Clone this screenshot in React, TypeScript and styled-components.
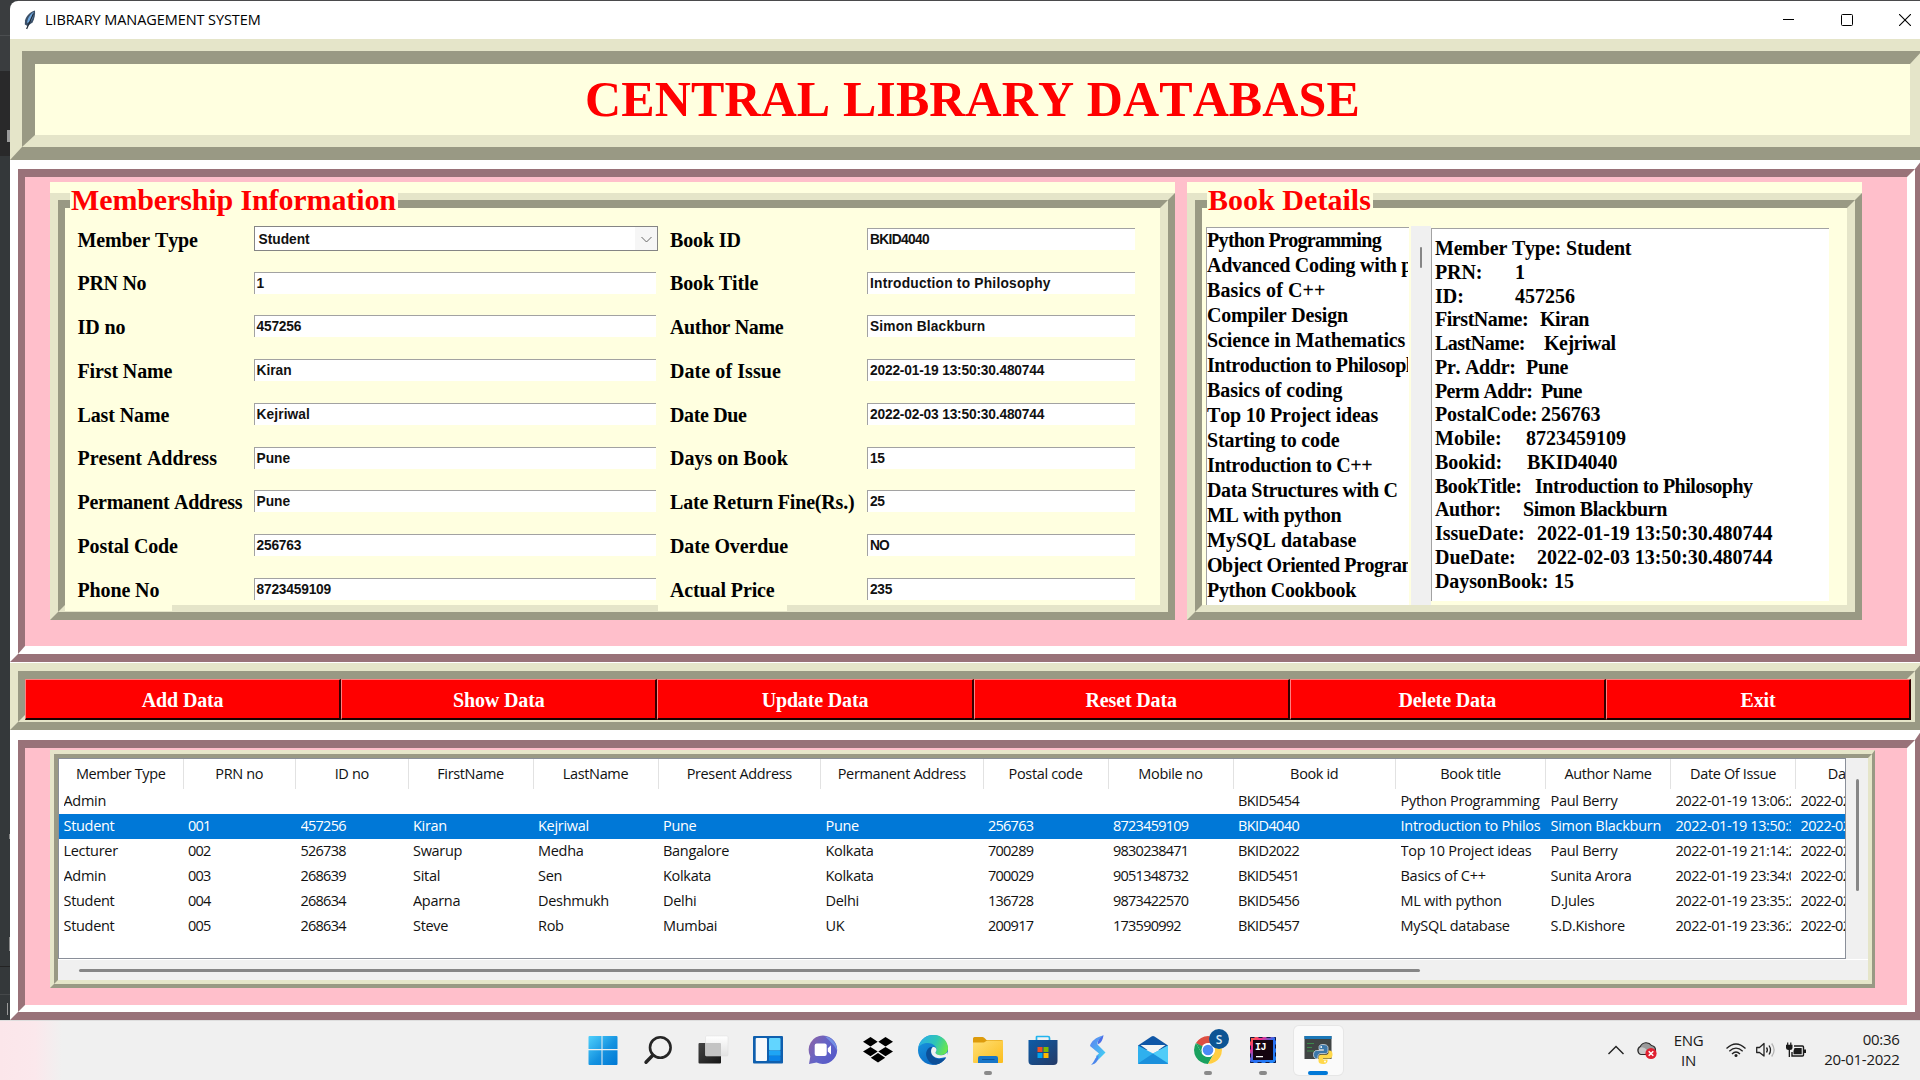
import React from 'react';
import styled, { createGlobalStyle, css } from 'styled-components';

const YELLOW = { base: '#ffffe0', light: '#e5e5c9', dark: '#999984' };
const PINK = { base: '#ffbfcb', light: '#ffffff', dark: '#997279' };
type Palette = typeof YELLOW;

const SERIF = "'Liberation Serif', 'Times New Roman', serif";
const SANS = "'Liberation Sans', Arial, sans-serif";
const UI = "'Open Sans', 'Noto Sans', sans-serif";

const GlobalStyle = createGlobalStyle`
  * { box-sizing: border-box; font-kerning: none !important; }
  html, body { margin: 0; padding: 0; }
  body { width: 1920px; height: 1080px; overflow: hidden; background: #333638; }
`;

const Screen = styled.div`
  width: 1920px;
  height: 1080px;
  display: flex;
  flex-direction: column;
  overflow: hidden;
`;

const Desktop = styled.div`
  height: 1020px;
  display: grid;
  grid-template-columns: 10px 1910px;
  padding-top: 1px;
  background: #4a4a4c;
`;

/* sliver of the editor that is open behind the window */
const Backdrop = styled.div`
  width: 18px;
  height: 1020px;
  margin-top: -1px;
  background:
    linear-gradient(#9a9a9a, #9a9a9a) 7px 130px / 3px 12px no-repeat,
    linear-gradient(#8a8a8a, #8a8a8a) 9px 834px / 1px 5px no-repeat,
    linear-gradient(#8a8a8a, #8a8a8a) 9px 937px / 1px 14px no-repeat,
    linear-gradient(#9a9a9a, #9a9a9a) 7px 1003px / 1px 12px no-repeat,
    linear-gradient(#4b4e50, #4b4e50) 0 35px / 10px 1px no-repeat,
    linear-gradient(#232323, #232323) 0 966px / 10px 1px no-repeat,
    linear-gradient(#45484a, #45484a) 0 994px / 10px 1px no-repeat,
    linear-gradient(#3a3d3f 0 71px, #29292a 71px 156px, #34383a 156px);
`;

const Window = styled.div`
  height: 1019px;
  display: flex;
  flex-direction: column;
  align-items: flex-start;
  background: #fff;
  border-top-left-radius: 8px;
  overflow: hidden;
  z-index: 1;
`;

const TitleBar = styled.header`
  width: 1910px;
  height: 38px;
  flex: none;
  display: flex;
  align-items: center;
  padding: 0 9px 0 13px;
  font: 14.5px ${UI};
  color: #000;
`;

const TitleText = styled.span`
  margin: -2px auto 0 9px;
  letter-spacing: -0.08px;
  white-space: nowrap;
`;

const Controls = styled.div`
  display: flex;
  gap: 46px;
`;

type Sides = [number, number, number, number];
const widths = (s: Sides) => s.map((n) => `${n}px`).join(' ');

/* a ridge is two bevels: the outer one raised, the inner one sunken */
const Outer = styled.div<{ $p: Palette; $b: Sides }>`
  flex: none;
  display: flex;
  border-style: solid;
  border-width: ${({ $b }) => widths($b)};
  border-color: ${({ $p }) => css`${$p.light} ${$p.dark} ${$p.dark} ${$p.light}`};
  background: ${({ $p }) => $p.base};
`;

const Inner = styled.div<{ $p: Palette; $b: Sides }>`
  flex: 1;
  min-width: 0;
  border-style: solid;
  border-width: ${({ $b }) => widths($b)};
  border-color: ${({ $p }) => css`${$p.dark} ${$p.light} ${$p.light} ${$p.dark}`};
  background: ${({ $p }) => $p.base};
`;

const BannerOuter = styled(Outer)`
  width: 1925px;
  height: 121px;
`;

const Banner = styled(Inner)`
  display: flex;
  justify-content: center;
  align-items: center;
  font: bold 50px ${SERIF};
  letter-spacing: 0.1px;
  color: #ff0000;
  white-space: nowrap;

  span { margin-top: -1px; }
`;

const DetailsOuter = styled(Outer)`
  width: 1912px;
  height: 502px;
`;

const Details = styled(Inner)`
  display: flex;
  gap: 12px;
  padding: 5px 0 0 25px;
`;

const Group = styled.section<{ $w: number }>`
  position: relative;
  width: ${({ $w }) => $w}px;
  height: 438px;
  padding-top: 11px;
  display: flex;
  background: ${YELLOW.base};
`;

const GroupOuter = styled(Outer)`
  width: 100%;
  height: 427px;
`;

const Legend = styled.h2<{ $track: number }>`
  position: absolute;
  left: 20px;
  top: 1px;
  margin: 0;
  padding: 0 2px 0 1px;
  height: 33px;
  background: ${YELLOW.base};
  font: bold 30px/34px ${SERIF};
  letter-spacing: ${({ $track }) => $track}px;
  color: #ff0000;
  white-space: nowrap;
`;

const Form = styled.div`
  display: grid;
  grid-template-columns: 188.5px 404px 209.5px 269px;
  grid-auto-rows: 43.75px;
  margin-top: 9px;
`;

const Label = styled.label<{ $track?: number }>`
  justify-self: start;
  height: 43.75px;
  padding: 2.5px 12.5px 0 12.5px;
  background: ${YELLOW.base};
  font: bold 20px/41px ${SERIF};
  letter-spacing: ${({ $track = -0.12 }) => $track}px;
  color: #000;
  white-space: nowrap;
`;

const Entry = styled.div<{ $track: number }>`
  align-self: center;
  height: 22px;
  width: calc(100% - 1.5px);
  border-top: 1.5px solid #a2a2a2;
  border-left: 1.5px solid #a2a2a2;
  padding-left: 2px;
  background: #fff;
  font: bold 13.75px/22px ${SANS};
  letter-spacing: ${({ $track }) => $track}px;
  color: #111;
  white-space: nowrap;
`;

const Combo = styled.div`
  align-self: center;
  height: 25px;
  width: 404px;
  display: flex;
  justify-content: space-between;
  align-items: center;
  padding: 1px 5px 0 4px;
  border: 1px solid #858585;
  background: linear-gradient(90deg, #fff 380px, #f6f6f6 380px);
  font: bold 13.75px ${SANS};
  color: #111;
`;

const Pair = styled.div`
  display: flex;
  align-items: flex-start;
  margin: 18px 0 0 4px;
`;

const List = styled.ul`
  margin: 1px 0 0;
  padding: 0;
  width: 203px;
  height: 378px;
  overflow: hidden;
  list-style: none;
  border: solid #a2a2a2;
  border-width: 1px 0 0 1px;
  background: #fff;
`;

const ListItem = styled.li<{ $track: number }>`
  height: 25px;
  width: 201px;
  overflow: hidden;
  font: bold 20px/25px ${SERIF};
  letter-spacing: ${({ $track }) => $track}px;
  color: #000;
  white-space: nowrap;
`;

const ListScroll = styled.div`
  width: 20px;
  height: 379px;
  margin-left: 2px;
  padding: 21px 0 0 9px;
  background: #f0f0f0;
`;

const Thumb = styled.div<{ $w: number; $h: number }>`
  width: ${({ $w }) => $w}px;
  height: ${({ $h }) => $h}px;
  border-radius: 2px;
  background: #868686;
`;

const Receipt = styled.div`
  width: 398px;
  height: 373px;
  margin-top: 2px;
  padding: 7px 0 0 3px;
  border: solid #a2a2a2;
  border-width: 1.5px 0 0 1.5px;
  background: #fff;
`;

const ReceiptLine = styled.div<{ $key: number; $track: number }>`
  display: grid;
  grid-template-columns: ${({ $key }) => $key}px auto;
  height: 23.75px;
  font: bold 20px/25px ${SERIF};
  letter-spacing: ${({ $track }) => $track}px;
  color: #000;
  white-space: nowrap;
`;

const ActionsOuter = styled(Outer)`
  width: 1912px;
  height: 67px;
  margin-top: 1px;
`;

const Actions = styled(Inner)`
  display: flex;
  align-items: flex-start;
`;

const ActionButton = styled.button<{ $w: number }>`
  flex: none;
  width: ${({ $w }) => $w}px;
  height: 41px;
  margin: 0;
  padding: 1px 0 0 0;
  border: solid;
  border-width: 1px 2px 2px 1px;
  border-color: #ff8080 #330000 #1a0000 #ff8080;
  background: #ff0000;
  font: bold 20px/38px ${SERIF};
  letter-spacing: -0.15px;
  color: #fff;
`;

const RecordsOuter = styled(Outer)`
  width: 1912px;
  height: 290px;
`;

const Records = styled(Inner)`
  padding: 2px 0 0 25px;
`;

const TableOuter = styled(Outer)`
  width: 1825px;
  height: 238px;
`;

const TableFrame = styled(Inner)`
  display: grid;
  grid-template-columns: 1788px 22px;
  grid-template-rows: 201px 21px;
  background: #f0f0f0;
`;

const Tree = styled.div`
  overflow: hidden;
  border: 1px solid #8a8f99;
  background: #fff;
  font: 14.5px ${UI};
  color: #111;
`;

const COLS = '124.5px 112.5px 112.5px 125px 125px 162.5px 162.5px 125px 125px 162.5px 150px 125px 125px 125px';

const HeadRow = styled.div`
  display: grid;
  grid-template-columns: ${COLS};
  width: 1862px;
  height: 30px;
`;

const HeadCell = styled.div`
  border-right: 1.5px solid #e2e2e2;
  text-align: center;
  line-height: 29px;
  letter-spacing: -0.35px;
  white-space: nowrap;
`;

const Row = styled.div<{ $on: boolean }>`
  display: grid;
  grid-template-columns: ${COLS};
  width: 1862px;
  height: 25px;
  background: ${({ $on }) => ($on ? '#0078d7' : 'transparent')};
  color: ${({ $on }) => ($on ? '#fff' : '#111')};
`;

const Cell = styled.div<{ $track: number }>`
  margin: 0 5px 0 4.5px;
  overflow: hidden;
  line-height: 24px;
  letter-spacing: ${({ $track }) => $track}px;
  white-space: nowrap;
`;

const VScroll = styled.div`
  padding: 21px 0 0 10px;
  background: #f0f0f0;
`;

const HScroll = styled.div`
  grid-column: 1 / 3;
  padding: 9px 0 0 21px;
  border-top: 1px solid #fff;
  background: #f0f0f0;
`;

const Taskbar = styled.footer`
  height: 60px;
  display: flex;
  align-items: center;
  padding-left: 575.5px;
  border-top: 1px solid #dedede;
  background: linear-gradient(90deg, #fbe6ea 0, #fbe8ec 35px, #f0f0f0 62px);
`;

const Slot = styled.div`
  position: relative;
  width: 55px;
  height: 60px;
  display: flex;
  align-items: center;
  justify-content: center;
`;

const Tile = styled.div<{ $on?: boolean }>`
  width: 49px;
  height: 49px;
  margin-top: -1px;
  display: flex;
  align-items: center;
  justify-content: center;
  border-radius: 5px;
  ${({ $on }) => $on && 'background: #fafafa; box-shadow: 0 0 0 1px #e6e6e6;'}

  svg { display: block; overflow: visible; }
`;

const Pip = styled.i<{ $on?: boolean }>`
  position: absolute;
  left: 50%;
  bottom: 6px;
  width: ${({ $on }) => ($on ? 20 : 8)}px;
  height: 4px;
  border-radius: 2px;
  transform: translateX(-50%);
  background: ${({ $on }) => ($on ? '#0078d7' : '#8a8a8a')};
`;

const Tray = styled.div`
  margin: -1px 0 0 auto;
  display: flex;
  align-items: center;
  padding-right: 20.5px;
  font: 15px/20px ${UI};
  color: #1a1a1a;

  svg { display: block; overflow: visible; }
`;

const CloudIcon = styled.svg`
  margin-left: 12px;
`;

const Language = styled.div`
  width: 30px;
  margin: 0 22px 0 17px;
  text-align: center;
  letter-spacing: -0.3px;
`;

const Status = styled.div`
  display: flex;
  align-items: center;
  gap: 10px;
`;

const Clock = styled.div`
  width: 94px;
  margin-top: -2px;
  text-align: right;
  letter-spacing: -0.3px;
  white-space: nowrap;
`;

type Field = { label: string; value: string; track?: number; labelTrack?: number };
const leftFields: Field[] = [
  { label: 'Member Type', value: 'Student' },
  { label: 'PRN No', value: '1', labelTrack: -0.3 },
  { label: 'ID no', value: '457256', track: -0.2, labelTrack: -0.1 },
  { label: 'First Name', value: 'Kiran' },
  { label: 'Last Name', value: 'Kejriwal', track: 0.1 },
  { label: 'Present Address', value: 'Pune', labelTrack: 0 },
  { label: 'Permanent Address', value: 'Pune', labelTrack: -0.28 },
  { label: 'Postal Code', value: '256763', track: -0.2 },
  { label: 'Phone No', value: '8723459109', track: -0.2 },
];
const rightFields: Field[] = [
  { label: 'Book ID', value: 'BKID4040', track: -0.65 },
  { label: 'Book Title', value: 'Introduction to Philosophy', track: 0.22 },
  { label: 'Author Name', value: 'Simon Blackburn', track: 0.15, labelTrack: -0.35 },
  { label: 'Date of Issue', value: '2022-01-19 13:50:30.480744', track: -0.18, labelTrack: 0.07 },
  { label: 'Date Due', value: '2022-02-03 13:50:30.480744', track: -0.18, labelTrack: -0.35 },
  { label: 'Days on Book', value: '15', track: -0.3, labelTrack: 0 },
  { label: 'Late Return Fine(Rs.)', value: '25', track: -0.3, labelTrack: -0.18 },
  { label: 'Date Overdue', value: 'NO', track: -1 },
  { label: 'Actual Price', value: '235', track: -0.3 },
];

const books: [string, number][] = [
  ['Python Programming', -0.67], ['Advanced Coding with python', -0.3], ['Basics of C++', 0.1],
  ['Compiler Design', -0.2], ['Science in Mathematics', -0.13], ['Introduction to Philosophy', -0.42],
  ['Basics of coding', -0.08], ['Top 10 Project ideas', -0.2], ['Starting to code', -0.2],
  ['Introduction to C++', -0.4], ['Data Structures with C', -0.35], ['ML with python', -0.42],
  ['MySQL database', 0], ['Object Oriented Programming', -0.45], ['Python Cookbook', -0.33],
];

const receipt: [string, string, number, number][] = [
  ['Member Type:', 'Student', 131, -0.2], ['PRN:', '1', 80, -0.1], ['ID:', '457256', 80, 0],
  ['FirstName:', 'Kiran', 105, -0.45], ['LastName:', 'Kejriwal', 109, -0.5], ['Pr. Addr:', 'Pune', 91, -0.3],
  ['Perm Addr:', 'Pune', 106, -0.65], ['PostalCode:', '256763', 106, -0.1], ['Mobile:', '8723459109', 91, 0],
  ['Bookid:', 'BKID4040', 92, -0.1], ['BookTitle:', 'Introduction to Philosophy', 100, -0.48],
  ['Author:', 'Simon Blackburn', 88, -0.45], ['IssueDate:', '2022-01-19 13:50:30.480744', 102, -0.05],
  ['DueDate:', '2022-02-03 13:50:30.480744', 102, -0.05], ['DaysonBook:', '15', 119, -0.1],
];

const actions = ['Add Data', 'Show Data', 'Update Data', 'Reset Data', 'Delete Data', 'Exit'];

const heads = [
  'Member Type', 'PRN no', 'ID no', 'FirstName', 'LastName', 'Present Address', 'Permanent Address',
  'Postal code', 'Mobile no', 'Book id', 'Book title', 'Author Name', 'Date Of Issue', 'Date Due',
];

/* letter spacing of each table column */
const cellTracks = [-0.3, -0.75, -0.75, -0.3, -0.3, -0.3, -0.3, -0.75, -0.75, -0.6, -0.27, -0.27, -0.42, -0.65];

const rows = [
  ['Admin', '', '', '', '', '', '', '', '', 'BKID5454', 'Python Programming', 'Paul Berry', '2022-01-19 13:06:22', '2022-02-03'],
  ['Student', '001', '457256', 'Kiran', 'Kejriwal', 'Pune', 'Pune', '256763', '8723459109', 'BKID4040', 'Introduction to Philosophy', 'Simon Blackburn', '2022-01-19 13:50:30', '2022-02-03'],
  ['Lecturer', '002', '526738', 'Swarup', 'Medha', 'Bangalore', 'Kolkata', '700289', '9830238471', 'BKID2022', 'Top 10 Project ideas', 'Paul Berry', '2022-01-19 21:14:22', '2022-02-03'],
  ['Admin', '003', '268639', 'Sital', 'Sen', 'Kolkata', 'Kolkata', '700029', '9051348732', 'BKID5451', 'Basics of C++', 'Sunita Arora', '2022-01-19 23:34:02', '2022-02-03'],
  ['Student', '004', '268634', 'Aparna', 'Deshmukh', 'Delhi', 'Delhi', '136728', '9873422570', 'BKID5456', 'ML with python', 'D.Jules', '2022-01-19 23:35:22', '2022-02-03'],
  ['Student', '005', '268634', 'Steve', 'Rob', 'Mumbai', 'UK', '200917', '173590992', 'BKID5457', 'MySQL database', 'S.D.Kishore', '2022-01-19 23:36:22', '2022-02-03'],
];

const Feather = () => (
  <svg width="13" height="20" viewBox="0 0 13 20">
    <path d="M12 0.5C8 1 3 6 2 10.500L1.800 14.500L4.500 16L9.500 12.500C11.500 9 12.500 4 12 0.500Z" fill="#3b5068" />
    <path d="M10.500 2C7.500 4 4.500 8 4 13L8 11C10 8 11 5 10.500 2Z" fill="#6fa8e0" />
    <path d="M10.500 3.500L3.600 19" stroke="#1d2733" strokeWidth="1.200" fill="none" />
  </svg>
);

const Start = () => (
  <svg width="30" height="30" viewBox="0 0 30 30">
    <defs>
      <linearGradient id="win" x1="0" y1="0" x2="1" y2="1">
        <stop offset="0" stopColor="#4fd0fc" /><stop offset="0.55" stopColor="#1492e0" /><stop offset="1" stopColor="#0078d4" />
      </linearGradient>
    </defs>
    <path d="M2 1H14V14H1V2Q1 1 2 1ZM15 1H29Q30 1 30 2V14H15ZM1 15.300H14V30H2Q1 30 1 29ZM15 15.300H30V29Q30 30 29 30H15Z" transform="translate(-.5 0)" fill="url(#win)" />
  </svg>
);

const Search = () => (
  <svg width="30" height="30" viewBox="0 0 30 30" fill="none" stroke="#252525">
    <circle cx="17.300" cy="12.500" r="10.300" strokeWidth="2.600" />
    <path d="M9.800 20.300L3 27.300" strokeWidth="3.400" strokeLinecap="round" />
  </svg>
);

const TaskView = () => (
  <svg width="30" height="30" viewBox="0 0 30 30">
    <defs>
      <linearGradient id="tvd" x1="0" y1="0" x2="1" y2="1"><stop offset="0" stopColor="#444" /><stop offset="1" stopColor="#161616" /></linearGradient>
      <linearGradient id="tvl" x1="0" y1="0" x2="0" y2="1"><stop offset="0" stopColor="#fff" /><stop offset="1" stopColor="#e2e2e2" /></linearGradient>
    </defs>
    <rect x="0.500" y="8" width="22.500" height="20.500" rx="1" fill="url(#tvd)" />
    <rect x="7.500" y="1" width="22.500" height="20" rx="1" fill="url(#tvl)" stroke="#dcdcdc" strokeWidth="0.500" />
    <path d="M7.500 8H22a1 1 0 0 1 1 1V21H8.500a1 1 0 0 1-1-1Z" fill="#c4c4c4" />
  </svg>
);

const Widgets = () => (
  <svg width="30" height="30" viewBox="0 0 30 30">
    <rect x="0" y="1" width="30" height="27.500" rx="1" fill="#0f5fae" />
    <rect x="2.700" y="3" width="11.300" height="23" rx="1" fill="#f7f9fb" />
    <rect x="16" y="3" width="11.500" height="12.500" rx="1" fill="#62d5ff" />
    <rect x="16" y="15.700" width="11.500" height="5" fill="#1ea5f5" />
    <rect x="16" y="21" width="11.500" height="5" rx="1" fill="#0a84e8" />
  </svg>
);

const Chat = () => (
  <svg width="30" height="30" viewBox="0 0 30 30">
    <defs>
      <linearGradient id="chat" x1="0" y1="0.200" x2="1" y2="0.800">
        <stop offset="0" stopColor="#8a63a8" /><stop offset="0.500" stopColor="#6264c8" /><stop offset="1" stopColor="#5558c8" />
      </linearGradient>
    </defs>
    <path d="M15 0.500A14.300 14.300 0 1 1 8.500 27.600L1 29L2.300 21.500A14.300 14.300 0 0 1 15 0.500Z" fill="url(#chat)" />
    <path d="M17 1.500A14 14 0 0 1 29 16C28 12 22 6 17 1.500Z" fill="#7da4f0" opacity=".7" />
    <rect x="6.700" y="8.500" width="12" height="12.500" rx="2" fill="#fff" />
    <path d="M19.800 13.200L23 10.300V19.500L19.800 16.500Z" fill="#fff" />
  </svg>
);

const Dropbox = () => (
  <svg width="30" height="30" viewBox="0 0 30 30" fill="#000">
    <path d="M7.500 2L14.700 6.700L7.500 11.400L0 6.700ZM22.500 2L30 6.700L22.500 11.400L15.300 6.700ZM7.500 11.900L14.700 16.600L7.500 21.300L0 16.600ZM22.500 11.900L30 16.600L22.500 21.300L15.300 16.600ZM7.800 22.800L15 18.100L22.200 22.800L15 27.500Z" />
  </svg>
);

const Edge = () => (
  <svg width="30" height="30" viewBox="0 0 30 30">
    <defs>
      <linearGradient id="eg" x1="0" y1="0.300" x2="1" y2="0.600"><stop offset="0" stopColor="#2aaee8" /><stop offset="0.550" stopColor="#2fc6b4" /><stop offset="1" stopColor="#6be84a" /></linearGradient>
      <linearGradient id="eb" x1="0" y1="0" x2="0.600" y2="1"><stop offset="0" stopColor="#1b9de2" /><stop offset="1" stopColor="#0a66c2" /></linearGradient>
    </defs>
    <circle cx="15" cy="15" r="15" fill="url(#eb)" />
    <path d="M0.300 12.500C2 4.500 8.500 0 15.500 0C24.500 0 30 6.500 30 13C30 18 26 20.300 22.500 20.300C19 20.300 17.500 18.800 17.500 17.700C17.500 17 18.500 16.500 18.500 14.500C18.500 11 14.500 8 10 8C5.500 8 1.800 10 0.300 12.500Z" fill="url(#eg)" />
    <path d="M12.500 12C8.500 14 7.500 18 8.500 21.500C9.800 26.500 14 29.800 18 29.700C22.500 28.800 26 26 28 22.800C24 24.800 18.500 24.800 15.300 21.500C12.500 18.800 12 15 14.800 12Z" fill="#0c4f98" />
    <path d="M14.500 12.300C16.500 11.500 18.500 13 18.500 14.800C18.500 16.500 17.400 17 17.500 17.800C17.700 19.500 20.500 20.500 23.500 20.200C26 20 28 19 29.400 17L30 22L28.100 22.700C27 21 23 24.500 17.500 22.500C13 20.500 11.800 15.500 14.500 12.300Z" fill="#f0f0f0" />
  </svg>
);

const Folder = () => (
  <svg width="30" height="30" viewBox="0 0 30 30">
    <defs><linearGradient id="fd" x1="0" y1="0" x2="1" y2="1"><stop offset="0" stopColor="#ffdf76" /><stop offset="1" stopColor="#fbbd1c" /></linearGradient></defs>
    <path d="M0 3.500Q0 2 1.500 2H9.500Q11 2 12 3.500L13.500 5H28.500Q30 5 30 6.500V12H0Z" fill="#dd9b0c" />
    <path d="M0 7.500H11L14 5.500H30V27Q30 28 29 28H1Q0 28 0 27Z" fill="url(#fd)" />
    <path d="M5 28V23Q5 21 7 21H23Q25 21 25 23V28Z" fill="#1876c8" />
    <path d="M9 24.500H21.500" stroke="#0d549a" strokeWidth="1" />
  </svg>
);

const Store = () => (
  <svg width="30" height="30" viewBox="0 0 30 30">
    <defs><linearGradient id="st" x1="0" y1="0" x2="1" y2="1"><stop offset="0" stopColor="#0d5ca8" /><stop offset="1" stopColor="#243a66" /></linearGradient></defs>
    <path d="M8.500 6V2Q8.500 1.500 9 1.500H20Q21.500 1.500 21.500 3V6" fill="none" stroke="#22b4ee" strokeWidth="1.700" />
    <path d="M0.500 5H29.500V26Q29.500 30 25.500 30H4.500Q0.500 30 0.500 26Z" fill="url(#st)" />
    <rect x="9.500" y="12" width="5" height="5" fill="#f25022" /><rect x="15.500" y="12" width="5" height="5" fill="#7fba00" />
    <rect x="9.500" y="18" width="5" height="5" fill="#00a4ef" /><rect x="15.500" y="18" width="5" height="5" fill="#ffb900" />
  </svg>
);

const Stream = () => (
  <svg width="30" height="30" viewBox="0 0 30 30">
    <defs><linearGradient id="sb" x1="0" y1="0" x2="1" y2="1"><stop offset="0" stopColor="#5f7cf0" /><stop offset="1" stopColor="#3fd8f4" /></linearGradient></defs>
    <path d="M7 11C8 6.500 13 2 20 0.500C16 4 14.500 6.500 14 9L22.500 17.500L14.500 25.500L13 21L16 18.500Z" fill="url(#sb)" />
    <path d="M20.500 0C16 3.500 14.500 6 14.500 9.500C18.500 8 20 4 20.500 0Z" fill="#4c6fe8" />
    <path d="M8 30C14.500 28.500 15.500 24 15.500 20.500C11.500 22.500 11.500 27 8 30Z" fill="#4a86ec" />
  </svg>
);

const Mail = () => (
  <svg width="30" height="30" viewBox="0 0 30 30">
    <path d="M0 10.500L13.500 1.500Q15 0.500 16.500 1.500L30 10.500V15H0Z" fill="#0f56a6" />
    <path d="M2.500 10H27.500L15 19Z" fill="#f4f4f4" />
    <path d="M0 10.500L15 18.500L30 10.500V28Q30 29 29 29H1Q0 29 0 28Z" fill="#2fb0ee" />
    <path d="M0 28.500L15 18.500L30 28.500Q30 29 29 29H1Z" fill="#1b90dc" />
    <path d="M30 10.500L15 18.500L30 28Z" fill="#50ccf8" />
  </svg>
);

const Chrome = () => (
  <svg width="30" height="30" viewBox="0 0 30 30">
    <circle cx="15" cy="15" r="14" fill="#fff" />
    <path d="M2.900 8A14 14 0 0 1 27.100 8H15A7 7 0 0 0 8.900 11.500Z" fill="#dd4f43" />
    <path d="M2.900 8A14 14 0 0 0 15 29L21 18.600A7 7 0 0 1 8.900 18.500Z" fill="#1aa15f" />
    <path d="M27.100 8A14 14 0 0 1 15 29L21 18.500A7 7 0 0 0 21 11.500L19 8Z" fill="#ffce43" />
    <path d="M2.900 8L8.900 18.500L11 12Z" fill="#1aa15f" />
    <circle cx="15" cy="15" r="6.600" fill="#fff" /><circle cx="15" cy="15" r="5.300" fill="#4c8bf5" />
    <circle cx="26" cy="4" r="10" fill="#0c5494" />
    <text x="26" y="8.500" textAnchor="middle" fontFamily="Open Sans, sans-serif" fontSize="12" fontWeight="600" fill="#d8e8f6">S</text>
  </svg>
);

const IntelliJ = () => (
  <svg width="30" height="30" viewBox="0 0 30 30">
    <defs>
      <linearGradient id="ij" x1="0" y1="0" x2="1" y2="1"><stop offset="0" stopColor="#fc6a2a" /><stop offset="0.250" stopColor="#f0308c" /><stop offset="0.500" stopColor="#2a6cf0" /><stop offset="1" stopColor="#1f86f8" /></linearGradient>
    </defs>
    <rect x="2" y="2" width="26" height="26" fill="url(#ij)" />
    <rect x="2.500" y="2.500" width="25" height="25" fill="none" stroke="#101840" strokeDasharray="4 4" />
    <rect x="5" y="5" width="20" height="20" fill="#140410" />
    <text x="7" y="15" fontFamily="Liberation Mono, monospace" fontSize="10" fontWeight="700" fill="#fff" letterSpacing="-0.500">IJ</text>
    <rect x="8" y="21" width="7" height="1.300" fill="#fff" />
  </svg>
);

const Python = () => (
  <svg width="30" height="30" viewBox="0 0 30 30">
    <rect x="1.500" y="1" width="27" height="23" fill="#404444" />
    <rect x="1.500" y="1" width="27" height="3" fill="#1b78b8" />
    <path d="M4 8.500H11M4 12.500H9M4 16H11" stroke="#3c8a4a" strokeWidth="1" />
    <path d="M20 9.500C16.500 9.500 16 11 16 12.500V14.500H20.500V15.500H13.500C11.500 15.500 10.500 17.500 10.500 19.500C10.500 22 11.500 23.500 13.500 23.500H15V21C15 19.500 16.500 18.500 18 18.500H22.500C24 18.500 25 17.500 25 16V12.500C25 10.500 23 9.500 20 9.500Z" fill="#3c77a9" stroke="#e8eef2" strokeWidth="0.700" />
    <path d="M20 29C23.500 29 24.500 27.500 24.500 26V24.500H20V23.500H26.500C28.500 23.500 29.500 21.500 29.500 19.500C29.500 17 28.500 15.500 26.500 15.500H25.500V17.500C25.500 19 24 19.800 22.500 19.800H18C16.500 19.800 15.500 21 15.500 22.500V26C15.500 28 17 29 20 29Z" fill="#ffd84a" />
    <circle cx="18.200" cy="12" r="0.900" fill="#fff" />
    <circle cx="22" cy="26.500" r="0.900" fill="#fff" />
  </svg>
);

const apps: { Icon: React.FC; open?: boolean; active?: boolean }[] = [
  { Icon: Start }, { Icon: Search }, { Icon: TaskView }, { Icon: Widgets }, { Icon: Chat },
  { Icon: Dropbox }, { Icon: Edge }, { Icon: Folder, open: true }, { Icon: Store }, { Icon: Stream },
  { Icon: Mail }, { Icon: Chrome, open: true }, { Icon: IntelliJ, open: true },
  { Icon: Python, open: true, active: true },
];

export default function App() {
  return (
    <Screen>
      <GlobalStyle />
      <Desktop>
        <Backdrop />
        <Window>
          <TitleBar>
            <Feather />
            <TitleText>LIBRARY MANAGEMENT SYSTEM</TitleText>
            <Controls>
              <svg width="12" height="12" viewBox="0 0 12 12"><path d="M-1 5.500H11" stroke="#000" /></svg>
              <svg width="12" height="12" viewBox="0 0 12 12"><rect x="0.500" y="0.500" width="11" height="11" rx="1" fill="none" stroke="#000" /></svg>
              <svg width="12" height="12" viewBox="0 0 12 12"><path d="M0 0L12 12M12 0L0 12" stroke="#000" strokeWidth="1.100" /></svg>
            </Controls>
          </TitleBar>

          <BannerOuter $p={YELLOW} $b={[12, 13, 13, 12]}>
            <Banner $p={YELLOW} $b={[13, 12, 12, 13]}><span>CENTRAL LIBRARY DATABASE</span></Banner>
          </BannerOuter>

          <DetailsOuter $p={PINK} $b={[9, 7, 8, 8]}>
            <Details $p={PINK} $b={[8, 8, 8, 7]}>
              <Group $w={1125}>
                <GroupOuter $p={YELLOW} $b={[7, 7, 8, 8]}>
                  <Inner $p={YELLOW} $b={[8, 8, 7, 7]}>
                    <Form>
                      {leftFields.map((l, i) => {
                        const r = rightFields[i];
                        return (
                          <React.Fragment key={l.label}>
                            <Label $track={l.labelTrack}>{l.label}</Label>
                            {i === 0 ? (
                              <Combo>
                                {l.value}
                                <svg width="11" height="7" viewBox="0 0 11 7"><path d="M0.500 1L5.500 6L10.500 1" fill="none" stroke="#666" /></svg>
                              </Combo>
                            ) : (
                              <Entry $track={l.track ?? 0}>{l.value}</Entry>
                            )}
                            <Label $track={r.labelTrack}>{r.label}</Label>
                            <Entry $track={r.track ?? 0}>{r.value}</Entry>
                          </React.Fragment>
                        );
                      })}
                    </Form>
                  </Inner>
                </GroupOuter>
                <Legend $track={-0.12}>Membership Information</Legend>
              </Group>

              <Group $w={675}>
                <GroupOuter $p={YELLOW} $b={[7, 7, 8, 8]}>
                  <Inner $p={YELLOW} $b={[8, 8, 7, 7]}>
                    <Pair>
                      <List>{books.map(([b, t]) => <ListItem key={b} $track={t}>{b}</ListItem>)}</List>
                      <ListScroll><Thumb $w={2} $h={21} /></ListScroll>
                      <Receipt>
                        {receipt.map(([k, v, w, t]) => (
                          <ReceiptLine key={k} $key={w} $track={t}><span>{k}</span><span>{v}</span></ReceiptLine>
                        ))}
                      </Receipt>
                    </Pair>
                  </Inner>
                </GroupOuter>
                <Legend $track={0.03}>Book Details</Legend>
              </Group>
            </Details>
          </DetailsOuter>

          <ActionsOuter $p={YELLOW} $b={[8, 7, 8, 8]}>
            <Actions $p={YELLOW} $b={[8, 8, 7, 7]}>
              {actions.map((a, i) => <ActionButton key={a} $w={i === 5 ? 305 : 316.2}>{a}</ActionButton>)}
            </Actions>
          </ActionsOuter>

          <RecordsOuter $p={PINK} $b={[10, 7, 8, 8]}>
            <Records $p={PINK} $b={[8, 8, 7, 7]}>
              <TableOuter $p={YELLOW} $b={[4, 3, 4, 4]}>
                <TableFrame $p={YELLOW} $b={[4, 4, 4, 4]}>
                  <Tree>
                    <HeadRow>{heads.map((h) => <HeadCell key={h}>{h}</HeadCell>)}</HeadRow>
                    {rows.map((r, i) => (
                      <Row key={i} $on={i === 1}>
                        {r.map((c, j) => <Cell key={j} $track={cellTracks[j]}>{c}</Cell>)}
                      </Row>
                    ))}
                  </Tree>
                  <VScroll><Thumb $w={3} $h={112} /></VScroll>
                  <HScroll><Thumb $w={1341} $h={3} /></HScroll>
                </TableFrame>
              </TableOuter>
            </Records>
          </RecordsOuter>
        </Window>
      </Desktop>

      <Taskbar>
        {apps.map(({ Icon, open, active }, i) => (
          <Slot key={i}>
            <Tile $on={active}><Icon /></Tile>
            {open && <Pip $on={active} />}
          </Slot>
        ))}
        <Tray>
          <svg width="16" height="10" viewBox="0 0 16 10"><path d="M0.500 9L8 1.500L15.500 9" fill="none" stroke="#222" strokeWidth="1.400" /></svg>
          <CloudIcon width="21" height="19" viewBox="0 0 21 19">
            <path d="M5 13.500A4.300 4.300 0 0 1 4.300 5.500A6.500 6.500 0 0 1 15.500 4.500A4.800 4.800 0 0 1 19.500 9.500L17 13.500Z" fill="#9a9a9a" stroke="#2a2a2a" strokeWidth="1.200" />
            <path d="M5 13A3.800 3.800 0 0 1 4.500 6.500Q8 5.500 11 9L16 13Z" fill="#c9c9c9" />
            <circle cx="15" cy="12.500" r="5.600" fill="#e02030" />
            <path d="M12.700 10.200L17.300 14.800M17.300 10.200L12.700 14.800" stroke="#fff" strokeWidth="1.500" />
          </CloudIcon>
          <Language>ENG<br />IN</Language>
          <Status>
            <svg width="20" height="15" viewBox="0 0 20 15" fill="none" stroke="#222" strokeWidth="1.300">
              <path d="M0.500 5.500Q10 -3.500 19.500 5.500M3.300 8.300Q10 2 16.700 8.300M6 11Q10 7 14 11" />
              <circle cx="10" cy="12.500" r="1.500" fill="#222" stroke="none" />
            </svg>
            <svg width="20" height="16" viewBox="0 0 20 16" fill="none" stroke="#222" strokeWidth="1.300">
              <path d="M0.700 5.500H3.500L8 1.500V14L3.500 10.500H0.700Z" strokeLinejoin="round" />
              <path d="M10.500 5.500Q12.300 8 10.500 10.500M13 3.500Q16 8 13 12.500" />
              <path d="M15.700 1.500Q20.500 8 15.700 14.500" stroke="#b5b5b5" />
            </svg>
            <svg width="20" height="16" viewBox="0 0 20 16">
              <path d="M8 4H16.500Q17.500 4 17.500 5V13Q17.500 14 16.500 14H6V10" fill="none" stroke="#1a1a1a" strokeWidth="1.400" />
              <path d="M8.500 6H15.700V12.300H7.500V9Z" fill="#1a1a1a" />
              <rect x="18" y="7.500" width="2" height="3.500" fill="#1a1a1a" />
              <path d="M1.700 0.500V3M4.800 0.500V3" stroke="#1a1a1a" strokeWidth="1.200" />
              <path d="M0 2.800H6.500V6Q6.500 8 4 8V15H2.700V8Q0 8 0 6Z" fill="#1a1a1a" />
            </svg>
          </Status>
          <Clock>00:36<br />20-01-2022</Clock>
        </Tray>
      </Taskbar>
    </Screen>
  );
}
